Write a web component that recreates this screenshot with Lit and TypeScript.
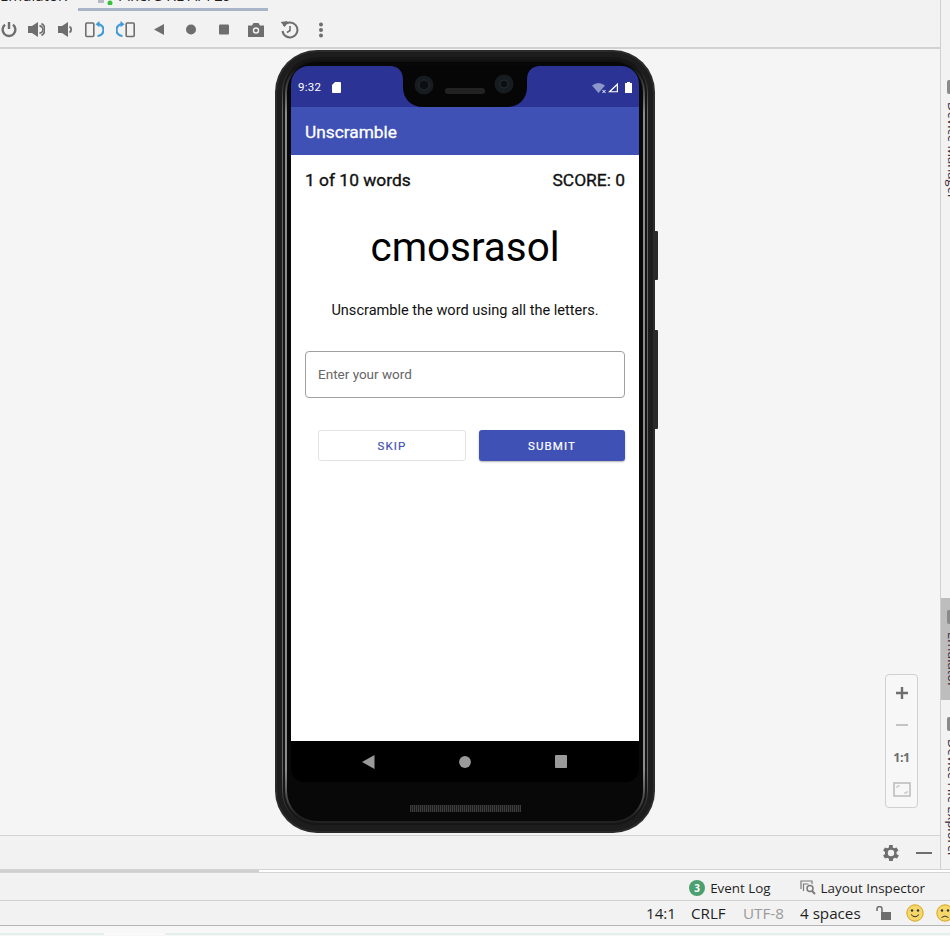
import { LitElement, html, css, svg } from 'lit';
import { customElement } from 'lit/decorators.js';

const GREY = '#6e6e6e';
const BLUE = '#3d9bd8';

// emulator toolbar icons, left to right
const TOOLBAR = [
  { w: 18, gap: 0, body: svg`<path d="M9 2v7" stroke="${GREY}" stroke-width="2.400" fill="none"/><path d="M5 4.600a6.400 6.400 0 1 0 8 0" stroke="${GREY}" stroke-width="2.400" fill="none"/>` },
  { w: 18, gap: 9, body: svg`<path d="M1 6h4l6-4v15l-6-4H1z" fill="${GREY}"/><path d="M12.500 6a3.500 3.500 0 0 1 0 7" stroke="${GREY}" stroke-width="1.800" fill="none"/><path d="M14.500 3.500a7 7 0 0 1 0 12" stroke="${GREY}" stroke-width="1.800" fill="none"/>` },
  { w: 16, gap: 12, body: svg`<path d="M1 6h4l6-4v15l-6-4H1z" fill="${GREY}"/><path d="M12.500 6.500a3.500 3.500 0 0 1 0 6" stroke="${GREY}" stroke-width="1.800" fill="none"/>` },
  { w: 20, gap: 11, body: svg`<rect x="1.800" y="3" width="8" height="13.500" rx="1" fill="none" stroke="${GREY}" stroke-width="1.600"/><path d="M13.500 4a6 6 0 0 1 0 12" fill="none" stroke="${BLUE}" stroke-width="2.200"/><path d="M15.500 1l-4 3.200 4 3z" fill="${BLUE}"/>` },
  { w: 20, gap: 12, body: svg`<rect x="10.200" y="3" width="8" height="13.500" rx="1" fill="none" stroke="${GREY}" stroke-width="1.600"/><path d="M6.500 4a6 6 0 0 0 0 12" fill="none" stroke="${BLUE}" stroke-width="2.200"/><path d="M4.500 1l4 3.200-4 3z" fill="${BLUE}"/>` },
  { w: 12, gap: 17, body: svg`<path d="M11 4v11L1 9.500z" fill="${GREY}"/>` },
  { w: 12, gap: 20, body: svg`<circle cx="6" cy="9.500" r="5" fill="${GREY}"/>` },
  { w: 12, gap: 21, body: svg`<rect x="1" y="4.500" width="10" height="10" rx="1" fill="${GREY}"/>` },
  { w: 18, gap: 17, body: svg`<path d="M1 5.500h4l1.500-2.500h5L13 5.500h4v11.500H1z" fill="${GREY}"/><circle cx="9" cy="10.500" r="3.200" fill="#f2f2f2"/><circle cx="9" cy="10.500" r="1.800" fill="${GREY}"/>` },
  { w: 19, gap: 15, body: svg`<path d="M3.500 6a7.500 7.500 0 1 1-1 5" fill="none" stroke="${GREY}" stroke-width="2"/><path d="M1 1.500h7L4.500 7z" fill="${GREY}" transform="rotate(-8 4 4)"/><path d="M10 6v4.500l-3 2" fill="none" stroke="${GREY}" stroke-width="1.600"/>` },
  { w: 6, gap: 19, body: svg`<circle cx="3" cy="4.500" r="2" fill="${GREY}"/><circle cx="3" cy="10" r="2" fill="${GREY}"/><circle cx="3" cy="15.500" r="2" fill="${GREY}"/>` },
];

@customElement('app-root')
export class AppRoot extends LitElement {
  static styles = css`
    :host {
      display: block;
      width: 950px;
      height: 936px;
      overflow: hidden;
      background: #f2f2f2;
      font-family: 'Open Sans', 'Liberation Sans', sans-serif;
      color: #1f1f1f;
    }
    .upper {
      display: flex;
      height: 869px;
    }
    .ide {
      flex: 1;
      min-width: 0;
      display: flex;
      flex-direction: column;
    }

    /* tab strip, cut off by the top of the picture */
    .tabs {
      height: 12px;
      overflow: hidden;
      flex: none;
    }
    .tab-row {
      display: flex;
      align-items: flex-start;
      height: 18px;
      margin-top: -13px;
      font-size: 15px;
      line-height: 17px;
      white-space: nowrap;
    }
    .tab-first {
      width: 98px;
    }
    .tab-icon {
      flex: none;
      width: 20px;
      height: 18px;
    }
    .tab-line {
      height: 3px;
      width: 190px;
      margin: 3px 0 0 78px;
      background: #a9b5c6;
    }

    .toolbar {
      flex: none;
      height: 35px;
      display: flex;
      align-items: center;
      border-bottom: 2px solid #d1d1d1;
    }
    .toolbar svg {
      flex: none;
      height: 19px;
    }

    .stage {
      position: relative;
      flex: 1;
      min-height: 0;
      display: flex;
      justify-content: center;
      padding: 1px 10px 0 0;
      background: #f5f5f5;
    }

    /* phone */
    .phone {
      position: relative;
      flex: none;
      box-sizing: border-box;
      width: 380px;
      height: 783px;
      padding: 2px;
      border-radius: 42px;
      background: #2b2b2b;
    }
    .rim-a {
      height: 100%;
      box-sizing: border-box;
      padding: 5px;
      border-radius: 40px;
      background: #1d1d1d;
    }
    .rim-b {
      height: 100%;
      box-sizing: border-box;
      padding: 1px;
      border-radius: 35px;
      background: linear-gradient(#161616 1%, #666 7%, #666 93%, #1c1c1c 99%);
    }
    .rim-c {
      height: 100%;
      box-sizing: border-box;
      padding: 2px;
      border-radius: 34px;
      background: #161616;
    }
    .rim-d {
      height: 100%;
      box-sizing: border-box;
      padding: 2px;
      border-radius: 32px;
      background: linear-gradient(#111 1%, #8c8c8c 7%, #8c8c8c 93%, #222 99%);
    }
    .body {
      height: 100%;
      box-sizing: border-box;
      padding: 4px 3px 0;
      border-radius: 30px;
      background: #080808;
      display: flex;
      flex-direction: column;
      align-items: center;
    }
    .side {
      position: absolute;
      left: 100%;
      width: 3px;
      background: #2a2a2a;
      border-radius: 0 1px 1px 0;
    }
    .power {
      top: 181px;
      height: 49px;
    }
    .volume {
      top: 280px;
      height: 99px;
    }
    .screen {
      flex: none;
      width: 348px;
      height: 716px;
      display: flex;
      flex-direction: column;
      border-radius: 18px 18px 14px 14px;
      overflow: hidden;
      background: #000;
      font-family: Roboto, 'Liberation Sans', sans-serif;
    }
    .speaker {
      flex: none;
      width: 111px;
      height: 7px;
      margin-top: 23px;
      background: repeating-linear-gradient(90deg, #3c3c3c 0 1px, #1c1c1c 1px 2px);
    }

    .status {
      position: relative;
      flex: none;
      height: 41px;
      box-sizing: border-box;
      padding: 1px 7px 0;
      display: flex;
      align-items: center;
      background: #2b3494;
      color: #fff;
      font-size: 11.5px;
    }
    .time {
      width: 34px;
      letter-spacing: 0.3px;
    }
    .status-end {
      margin-left: auto;
      display: flex;
      align-items: center;
      gap: 1px;
    }
    .battery {
      margin-left: 5px;
    }
    .notch {
      position: absolute;
      left: 99px;
      top: 0;
    }

    .appbar {
      flex: none;
      height: 48px;
      box-sizing: border-box;
      padding: 1px 0 0 14px;
      display: flex;
      align-items: center;
      background: #3f51b5;
      color: #fff;
      font-size: 17.3px;
      -webkit-text-stroke: 0.3px #fff;
    }

    .content {
      flex: 1;
      min-height: 0;
      box-sizing: border-box;
      padding: 0 14px;
      background: #fff;
      color: #111;
    }
    .counts {
      height: 50px;
      display: flex;
      justify-content: space-between;
      align-items: center;
      font-size: 17.4px;
      -webkit-text-stroke: 0.35px #111;
    }
    .word {
      margin-top: 15px;
      height: 56px;
      line-height: 56px;
      text-align: center;
      font-size: 40.4px;
      color: #000;
    }
    .hint {
      margin-top: 25px;
      height: 20px;
      line-height: 20px;
      text-align: center;
      font-size: 14.55px;
    }
    .field {
      margin-top: 30px;
      height: 47px;
      box-sizing: border-box;
      padding: 0 0 2px 12px;
      display: flex;
      align-items: center;
      border: 1px solid #a0a0a0;
      border-radius: 4px;
      font-size: 13.5px;
      color: #666;
    }
    .actions {
      margin-top: 32px;
      padding-left: 13px;
      display: flex;
      gap: 13px;
    }
    .btn {
      flex: 1;
      height: 31px;
      box-sizing: border-box;
      display: flex;
      align-items: center;
      justify-content: center;
      border-radius: 3px;
      font-size: 11.5px;
      letter-spacing: 1.1px;
      -webkit-text-stroke: 0.2px currentColor;
    }
    .skip {
      border: 1px solid #e3e3e3;
      color: #3f51b5;
    }
    .submit {
      background: #3f51b5;
      color: #fff;
      box-shadow: 0 1px 2px rgba(0, 0, 0, 0.3);
    }

    .nav {
      flex: none;
      height: 41px;
      display: flex;
      align-items: center;
      background: #000;
      padding-left: 71px;
      gap: 84px;
    }
    .nav svg {
      flex: none;
    }

    /* zoom control floats over the stage */
    .zoomer {
      position: absolute;
      left: 885px;
      top: 625px;
      width: 33px;
      height: 134px;
      box-sizing: border-box;
      padding-top: 2px;
      display: flex;
      flex-direction: column;
      align-items: center;
      border: 1px solid #d0d0d0;
      border-radius: 4px;
      background: #f7f7f7;
      color: #6e6e6e;
    }
    .zoomer > * {
      flex: none;
      height: 32px;
      display: flex;
      align-items: center;
      justify-content: center;
    }
    .one {
      font: bold 12.5px 'Open Sans', sans-serif;
      letter-spacing: -0.5px;
    }

    .panel {
      flex: none;
      height: 34px;
      box-sizing: border-box;
      border-top: 1px solid #d4d4d4;
      display: flex;
      align-items: center;
      justify-content: flex-end;
      gap: 14px;
      padding: 0 8px 0 0;
    }

    /* rotated tool window labels, mostly off the right edge */
    .rail {
      flex: none;
      width: 9px;
      border-left: 1px solid #cfcfcf;
      overflow: hidden;
      display: flex;
      flex-direction: column;
      background: #f2f2f2;
    }
    .rail-item {
      flex: none;
      box-sizing: border-box;
      display: flex;
      flex-direction: column;
      padding-left: 4px;
      font-size: 13px;
      line-height: 16px;
      color: #3a2a40;
      white-space: nowrap;
    }
    .rail-item span {
      writing-mode: vertical-rl;
      width: 16px;
      margin-top: 8px;
    }
    .rail-item i {
      display: block;
      width: 14px;
      height: 14px;
      margin-left: 2px;
      background: #8a8a8a;
      border-radius: 2px;
    }
    .device-manager {
      height: 598px;
      padding-top: 80px;
    }
    .emulator {
      height: 102px;
      padding-top: 12px;
      background: #bdbdbd;
    }
    .file-explorer {
      flex: 1;
      padding-top: 17px;
    }

    .splitter {
      height: 4px;
      box-sizing: border-box;
      display: flex;
      background: #fff;
      border-top: 1px solid #d4d4d4;
      border-bottom: 1px solid #d4d4d4;
    }
    .splitter div {
      width: 259px;
      background: #cfcfcf;
    }

    .tools {
      height: 27px;
      box-sizing: border-box;
      padding: 2px 25px 0 0;
      display: flex;
      align-items: center;
      justify-content: flex-end;
      font-size: 13.4px;
    }
    .tool {
      display: flex;
      align-items: center;
      gap: 5px;
    }
    .tool + .tool {
      margin-left: 29px;
    }
    .badge {
      width: 16px;
      height: 16px;
      border-radius: 50%;
      background: #4c9f6f;
      color: #fff;
      font-size: 10px;
      font-weight: 700;
      line-height: 16px;
      text-align: center;
    }

    .statusline {
      height: 26px;
      box-sizing: border-box;
      border-top: 1px solid #d1d1d1;
      border-bottom: 1px solid #b5b5b5;
      box-shadow: 0 1px 1px rgba(0, 0, 0, 0.15);
      display: flex;
      align-items: center;
      padding-left: 646px;
      font-size: 15.2px;
      white-space: nowrap;
    }
    .statusline span {
      flex: none;
    }
    .col-pos {
      width: 45px;
    }
    .col-eol {
      width: 52px;
    }
    .col-enc {
      width: 57px;
      color: #9a9a9a;
    }
    .col-indent {
      width: 76px;
    }
    .lock {
      flex: none;
      margin-right: 14px;
    }
    .face {
      flex: none;
    }
    .face + .face {
      margin-left: 12px;
    }
    .foot {
      height: 10px;
      box-sizing: border-box;
      padding-top: 7px;
      background: #f7f7f7;
    }
    .foot div {
      height: 2px;
      background: linear-gradient(90deg, #e2efed 0 104px, #fafafa 104px 165px, #e2efed 165px);
    }
  `;

  render() {
    return html`
      <div class="upper">
        <div class="ide">
          <div class="tabs">
            <div class="tab-row">
              <span class="tab-first">Emulator:</span>
              <svg class="tab-icon" viewBox="0 0 20 18">
                <rect x="0" y="12" width="6" height="4" fill="#b9b9c4" />
                <circle cx="12" cy="16" r="2.500" fill="#3ac13a" />
              </svg>
              <span>Pixel 3 XL API 29</span>
            </div>
            <div class="tab-line"></div>
          </div>
          <div class="toolbar">
            ${TOOLBAR.map(
              (icon, i) => html`<svg
                width=${icon.w}
                viewBox="0 0 ${icon.w} 19"
                style="margin-left:${i === 0 ? 0 : icon.gap}px"
              >${icon.body}</svg>`,
            )}
          </div>
          <div class="stage">
            <div class="phone">
              <div class="side power"></div>
              <div class="side volume"></div>
              <div class="rim-a"><div class="rim-b"><div class="rim-c"><div class="rim-d"><div class="body">
                ${this.renderScreen()}
                <div class="speaker"></div>
              </div></div></div></div></div>
            </div>
            <div class="zoomer">
              <div>
                <svg width="14" height="14" viewBox="0 0 14 14"><path d="M7 1v12M1 7h12" stroke="#6e6e6e" stroke-width="2.400" /></svg>
              </div>
              <div>
                <svg width="14" height="14" viewBox="0 0 14 14"><path d="M1 7h12" stroke="#c4c4c4" stroke-width="2" /></svg>
              </div>
              <div class="one">1:1</div>
              <div>
                <svg width="18" height="15" viewBox="0 0 18 15" fill="none" stroke="#bbb">
                  <rect x="1" y="1" width="16" height="13" stroke-width="1.500" />
                  <path d="M4 6V4h3M14 9v2h-3" stroke-width="1" />
                </svg>
              </div>
            </div>
          </div>
          <div class="panel">
            <svg width="22" height="22" viewBox="1.400 0 24 24">
              <path fill="#6e6e6e" d="M19.400 13a7.500 7.500 0 0 0 0-2l2.100-1.600-2-3.500-2.500 1a7.500 7.500 0 0 0-1.700-1L15.400 3.300h-4l-.4 2.600a7.500 7.500 0 0 0-1.700 1l-2.500-1-2 3.500L6.900 11a7.500 7.500 0 0 0 0 2l-2.100 1.600 2 3.500 2.500-1a7.500 7.500 0 0 0 1.700 1l.4 2.600h4l.4-2.600a7.500 7.500 0 0 0 1.700-1l2.500 1 2-3.500zM13.400 15.500a3.500 3.500 0 1 1 0-7 3.500 3.500 0 0 1 0 7z" />
            </svg>
            <svg width="16" height="4" viewBox="0 0 16 4"><rect y="1" width="16" height="2" fill="#6e6e6e" /></svg>
          </div>
        </div>
        <div class="rail">
          <div class="rail-item device-manager"><i></i><span>Device Manager</span></div>
          <div class="rail-item emulator"><i></i><span>Emulator</span></div>
          <div class="rail-item file-explorer"><i></i><span>Device File Explorer</span></div>
        </div>
      </div>
      <div class="splitter"><div></div></div>
      <div class="tools">
        <div class="tool"><div class="badge">3</div>Event Log</div>
        <div class="tool">
          <svg width="16" height="15" viewBox="0 0 16 15" fill="none" stroke="#7a7a7a">
            <path d="M1 9V1h11v3" stroke-width="1.200" />
            <path d="M3.500 11V4h5" stroke-width="1.200" />
            <circle cx="10" cy="8.500" r="3" stroke-width="1.500" />
            <path d="M12 11l3 3" stroke-width="2" />
          </svg>
          Layout Inspector
        </div>
      </div>
      <div class="statusline">
        <span class="col-pos">14:1</span>
        <span class="col-eol">CRLF</span>
        <span class="col-enc">UTF-8</span>
        <span class="col-indent">4 spaces</span>
        <svg class="lock" width="16" height="14" viewBox="0 0 16 14">
          <rect x="5" y="6" width="10" height="8" fill="#6e6e6e" />
          <path d="M1 5V3a2.500 2.500 0 0 1 5 0v3" fill="none" stroke="#6e6e6e" stroke-width="1.500" />
        </svg>
        ${this.renderFace(false)}
        ${this.renderFace(true)}
      </div>
      <div class="foot"><div></div></div>
    `;
  }

  renderFace(sad: boolean) {
    const mouth = sad ? 'M5.500 13.500q3.500-3 7 0' : 'M5 10.500q4 4.500 8 0';
    return html`<svg class="face" width="18" height="18" viewBox="0 0 18 18">
      <circle cx="9" cy="9" r="8.200" fill="#f5d76a" stroke="#d9a520" />
      <circle cx="6" cy="6.500" r="1.200" fill="#333" />
      <circle cx="12" cy="6.500" r="1.200" fill="#333" />
      <path d=${mouth} fill="none" stroke="#333" />
    </svg>`;
  }

  renderScreen() {
    return html`<div class="screen">
      <div class="status">
        <span class="time">9:32</span>
        <svg width="9" height="11" viewBox="0 0 9 11"><path d="M3 0h5a1 1 0 0 1 1 1v9a1 1 0 0 1-1 1H1a1 1 0 0 1-1-1V3z" fill="#fff" /></svg>
        <svg class="notch" width="150" height="41" viewBox="0 0 150 41">
          <path d="M0 0C8 0 13 5 13 14v7c0 12 8 20 20 20h84c12 0 20-8 20-20v-7c0-9 5-14 13-14z" fill="#060606" />
          <circle cx="34" cy="19" r="9.500" fill="#161c20" />
          <circle cx="34" cy="19" r="5" fill="#0c0f12" stroke="#2c343a" stroke-width="0.700" />
          <circle cx="114" cy="18" r="9.500" fill="#161c20" />
          <circle cx="114" cy="18" r="4" fill="#0c0f12" stroke="#2c343a" stroke-width="0.700" />
          <rect x="55" y="22" width="40" height="6" rx="3" fill="#222" />
        </svg>
        <div class="status-end">
          <svg width="14" height="11" viewBox="0 0 14 11">
            <path d="M0 3.500Q6.500-1.500 13 3.500L6.500 11z" fill="#8e97cc" />
            <path d="M10.500 8l3 3M13.500 8l-3 3" stroke="#fff" stroke-width="1" />
          </svg>
          <svg width="12" height="11" viewBox="0 0 12 11"><path d="M11 .800V10.300H1zM9.800 3.700L4 9.300h5.800z" fill="#fff" fill-rule="evenodd" /></svg>
          <svg class="battery" width="7" height="11" viewBox="0 0 7 11"><path d="M2 0h3v1h2v10H0V1h2z" fill="#fff" /></svg>
        </div>
      </div>
      <div class="appbar">Unscramble</div>
      <div class="content">
        <div class="counts"><span>1 of 10 words</span><span>SCORE: 0</span></div>
        <div class="word">cmosrasol</div>
        <div class="hint">Unscramble the word using all the letters.</div>
        <div class="field">Enter your word</div>
        <div class="actions">
          <div class="btn skip">SKIP</div>
          <div class="btn submit">SUBMIT</div>
        </div>
      </div>
      <div class="nav">
        <svg width="13" height="14" viewBox="0 0 13 14"><path d="M12.500 0v14L0 7z" fill="#9a9a9a" /></svg>
        <svg width="12" height="12" viewBox="0 0 12 12"><circle cx="6" cy="6" r="5.900" fill="#9a9a9a" /></svg>
        <svg width="12" height="13" viewBox="0 0 12 13"><rect width="12" height="13" rx="1" fill="#9a9a9a" /></svg>
      </div>
    </div>`;
  }
}
